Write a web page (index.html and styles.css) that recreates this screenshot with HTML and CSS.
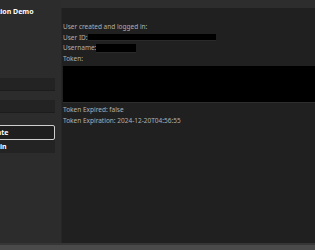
FILE: index.html
```html
<!DOCTYPE html>
<html>
<head>
<meta charset="utf-8">
<link rel="stylesheet" href="styles.css">
</head>
<body>
<div class="app">
  <div class="content">
    <aside class="side">
      <div class="side-inner">
        <div class="title">Authentication Demo</div>
        <div class="input input-user"></div>
        <div class="input input-pass"></div>
        <div class="btn btn-focus">Create</div>
        <div class="btn">Login</div>
      </div>
    </aside>
    <main class="panel">
      <div class="line">User created and logged in:</div>
      <div class="line">User ID:<span class="redact redact-id"></span></div>
      <div class="line">Username:<span class="redact redact-name"></span></div>
      <div class="line">Token:</div>
      <div class="token"></div>
      <div class="line">Token Expired: false</div>
      <div class="line">Token Expiration: 2024-12-20T04:56:55</div>
    </main>
  </div>
  <div class="bottombar"></div>
</div>
</body>
</html>
```
FILE: styles.css
```css
html, body {
  margin: 0;
  padding: 0;
}
body {
  width: 315px;
  height: 250px;
  overflow: hidden;
  background: #2d2d2d;
  font-family: "Noto Sans", sans-serif;
}
.app {
  display: flex;
  flex-direction: column;
  height: 250px;
}
.content {
  display: flex;
  height: 243px;
}
.side {
  width: 61px;
  flex: none;
  overflow: hidden;
  background: #2c2c2c;
}
.side-inner {
  margin-left: -61px;
  width: 116px;
  padding-top: 7px;
  display: flex;
  flex-direction: column;
}
.title {
  color: #ffffff;
  font-weight: bold;
  font-size: 7px;
  line-height: 10px;
  text-align: center;
  white-space: nowrap;
  padding-right: 2px;
}
.input {
  height: 12px;
  background: #232323;
  border-bottom: 1px solid #1c1c1c;
}
.input-user {
  margin-top: 61px;
}
.input-pass {
  margin-top: 9px;
}
.btn {
  height: 13px;
  background: #232323;
  color: #ffffff;
  font-weight: bold;
  font-size: 7px;
  line-height: 13px;
  text-align: center;
  box-sizing: border-box;
}
.btn-focus {
  margin-top: 12px;
  height: 15px;
  line-height: 13px;
  border: 1px solid #cfcfcf;
  border-radius: 2px;
  background: #1f1f1f;
}
.panel {
  flex: 1;
  margin-top: 8px;
  height: 229px;
  background: #202020;
  border-left: 1px solid #262626;
  border-bottom: 1px solid #000000;
  padding: 14px 0 0 1px;
  color: #b0b0b0;
  font-size: 6.5px;
  display: flex;
  flex-direction: column;
}
.line {
  height: 10.5px;
  line-height: 10.5px;
  display: flex;
  align-items: center;
}
.redact {
  display: inline-block;
  background: #000000;
  height: 6px;
  border-bottom: 1px solid #2a2a2a;
}
.redact-id {
  width: 128px;
}
.redact-name {
  width: 40px;
  height: 8px;
}
.token {
  height: 36px;
  background: #000000;
  border-bottom: 1px solid #2e2e2e;
  margin: 2px 0 2px 0;
}
.bottombar {
  height: 7px;
  background: #4a4a4a;
  border-top: 2px solid #363636;
  box-sizing: border-box;
}
```
